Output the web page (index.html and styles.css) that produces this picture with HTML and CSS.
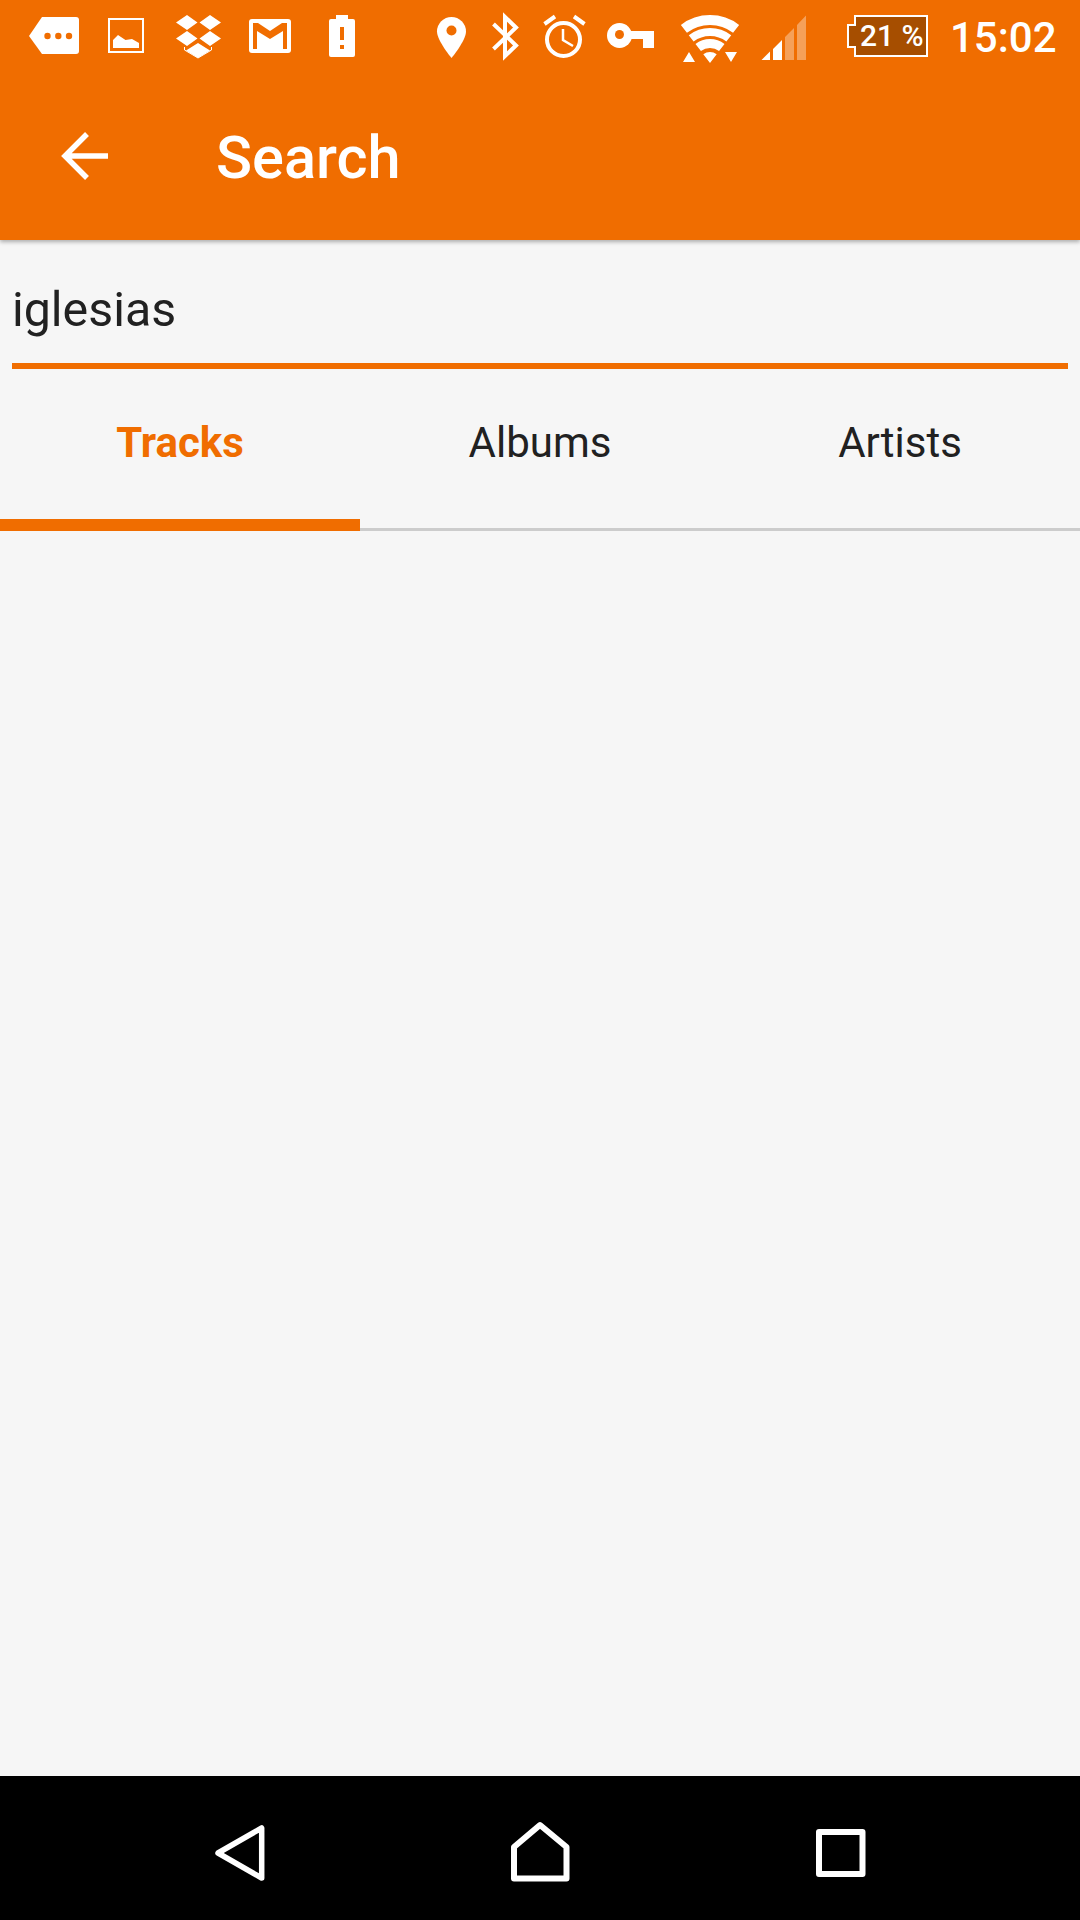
FILE: index.html

```html
<!DOCTYPE html>
<html lang="en">
    <head>
        <meta charset="UTF-8" />
        <title>Search</title>
        <link rel="stylesheet" href="styles.css">
    </head>
    <body>
        <div class="app">
            <header class="top">
                <div class="status">
                    <!-- every icon's viewBox is its slot on the status bar -->
                    <svg class="ico" width="72" height="72" viewBox="24 0 72 72">
                        <path class="w" d="M79 20v31a3 3 0 0 1-3 3H42L29 36l13-19h34a3 3 0 0 1 3 3z"/>
                        <circle class="o" cx="47.500" cy="36" r="3.200"/>
                        <circle class="o" cx="58.300" cy="36" r="3.200"/>
                        <circle class="o" cx="69" cy="36" r="3.200"/>
                    </svg>
                    <svg class="ico" width="69" height="72" viewBox="96 0 69 72">
                        <rect class="s" x="109" y="19" width="34" height="33" stroke-width="2"/>
                        <path class="w" d="M113 48v-8l5-5 7.500 5 6.500-1 7 4v5z"/>
                    </svg>
                    <svg class="ico" width="75" height="72" viewBox="165 0 75 72">
                        <path class="w" d="M187 15l10.500 7.500L187 30l-11-7.500zM210 15l11 7.500L210 30l-10.500-7.500zM187 31l10.500 7.500L187 46l-11-7.500zM210 31l11 7.500L210 46l-10.500-7.500zM198 43l12 7.500-12 7.500-12-7.500z"/>
                        <path class="s" d="M184.500 47v3l13.500 8 13.500-8v-3" stroke-width="1"/>
                    </svg>
                    <svg class="ico" width="75" height="72" viewBox="240 0 75 72">
                        <rect class="w" x="249" y="19" width="42" height="34" rx="3"/>
                        <path class="o" d="M253 23h5l12 8 12-8h5v26h-4V31l-13 8-13-8v18h-4z"/>
                    </svg>
                    <svg class="ico" width="115" height="72" viewBox="315 0 115 72">
                        <path class="w" d="M336 15h12v4h5a2 2 0 0 1 2 2v34a2 2 0 0 1-2 2h-22a2 2 0 0 1-2-2V21a2 2 0 0 1 2-2h5z"/>
                        <path class="o" d="M340 27h4v13h-4zM340 45h4v4h-4z"/>
                    </svg>
                    <svg class="ico" width="55" height="72" viewBox="430 0 55 72">
                        <path class="w" d="M451.500 17a14.500 14.500 0 0 1 14.500 14.500c0 9-14.500 26.500-14.500 26.500S437 40.500 437 31.500A14.500 14.500 0 0 1 451.500 17z"/>
                        <circle class="o" cx="451.500" cy="30.500" r="5"/>
                    </svg>
                    <svg class="ico" width="52" height="72" viewBox="485 0 52 72">
                        <path class="s" d="M493.500 24L516 45.500 505 56V17l11 10.500L493.500 49" stroke-width="4"/>
                    </svg>
                    <svg class="ico" width="60" height="72" viewBox="537 0 60 72">
                        <circle class="s" cx="563.500" cy="39.500" r="16.500" stroke-width="4"/>
                        <path class="s" d="M563 29v11l10 6" stroke-width="2.500"/>
                        <path class="s" d="M544.500 24l10.500-7.500M584.500 24L574 16.500" stroke-width="4"/>
                    </svg>
                    <svg class="ico" width="78" height="72" viewBox="597 0 78 72">
                        <circle class="w" cx="619.500" cy="35.500" r="12.500"/>
                        <path class="w" d="M628 31h26v17h-11v-9h-15z"/>
                        <circle class="o" cx="619.500" cy="34.500" r="4.500"/>
                    </svg>
                    <svg class="ico" width="81" height="72" viewBox="675 0 81 72">
                        <path class="s" d="M683.900 28.900A43 43 0 0 1 736.100 28.900" stroke-width="10"/>
                        <path class="s" d="M691.200 38.400A31 31 0 0 1 728.800 38.400" stroke-width="8"/>
                        <path class="s" d="M698.200 47.500A19.500 19.500 0 0 1 721.800 47.500" stroke-width="9"/>
                        <path class="w" d="M703.300 54.300A11 11 0 0 1 716.700 54.300L710 63zM683 62l6-10 6 10zM725 52h12l-6 10z"/>
                    </svg>
                    <svg class="ico" width="91" height="72" viewBox="756 0 91 72">
                        <path class="w" d="M761.500 60l8.500-8.500V60zM773 60V49l9-9v20z"/>
                        <path class="w dim" d="M785 60V37l9-9v32zM797 60V25l9-9.500V60z"/>
                    </svg>
                    <svg class="ico" width="92" height="72" viewBox="847 0 92 72">
                        <path class="batt" d="M855 16h72v40h-72V47h-7V25h7z" stroke-width="2"/>
                        <text class="batt-txt" x="860" y="46">21 %</text>
                    </svg>
                    <span class="time">15:02</span>
                </div>
                <div class="bar">
                    <svg class="back" width="56" height="56" viewBox="56 128 56 56">
                        <path class="s" d="M108 156H64M87 134l-22 22 22 22" stroke-width="5.500"/>
                    </svg>
                    <h1 class="title">Search</h1>
                </div>
            </header>

            <div class="field">
                <div class="query">iglesias</div>
            </div>

            <div class="tabs">
                <div class="tab on">Tracks</div>
                <div class="tab">Albums</div>
                <div class="tab">Artists</div>
            </div>

            <main class="list"></main>

            <nav class="nav">
                <div class="key">
                    <svg width="60" height="64" viewBox="210 1819 60 64">
                        <path class="s round" d="M261.700 1828v50L218 1853z" stroke-width="5.500"/>
                    </svg>
                </div>
                <div class="key">
                    <svg width="60" height="64" viewBox="510 1819 60 64">
                        <path class="s round" d="M514 1878.500h52.500V1847L540 1825l-26 22z" stroke-width="6"/>
                    </svg>
                </div>
                <div class="key">
                    <svg width="60" height="64" viewBox="810 1819 60 64">
                        <rect class="s round" x="819" y="1832" width="43.500" height="42" stroke-width="6"/>
                    </svg>
                </div>
            </nav>
        </div>
    </body>
</html>
```

FILE: styles.css

```css
body {
    margin: 0;
    font-family: Roboto, sans-serif;
    background-color: #f6f6f6;
    color: #212121;
}

.app {
    height: 1920px;
    display: flex;
    flex-direction: column;
}

/* orange top */
.top {
    height: 240px;
    background-color: #f06d00;
    box-shadow: 0 2px 4px rgba(0, 0, 0, 0.3);
}

.status {
    height: 72px;
    padding-left: 24px;
    display: flex;
    align-items: flex-start;
    color: #fff;
}

.ico {
    flex: none;
}

.w {
    fill: #fff;
}

.o {
    fill: #f06d00;
}

.s {
    fill: none;
    stroke: #fff;
}

.round {
    stroke-linejoin: round;
}

.dim {
    opacity: 0.35;
}

.batt {
    fill: #a64e00;
    stroke: #fff;
}

.batt-txt {
    font-family: Roboto, sans-serif;
    font-size: 30px;
    font-weight: 500;
    fill: #fff;
}

.time {
    margin-left: 11px;
    font-size: 42px;
    font-weight: 500;
    line-height: 48px;
    padding-top: 14px;
}

.bar {
    height: 168px;
    display: flex;
    align-items: flex-start;
    padding-left: 56px;
}

.back {
    margin-top: 56px;
}

.title {
    margin: 0;
    margin-left: 104px;
    padding-top: 46px;
    font-size: 59.500px;
    line-height: 80px;
    font-weight: 500;
    color: #fff;
}

/* search input */
.field {
    height: 123px;
    padding: 0 12px;
}

.query {
    box-sizing: border-box;
    height: 129px;
    padding-top: 30px;
    font-size: 48.300px;
    line-height: 80px;
    border-bottom: 6px solid #f06d00;
}

.tabs {
    margin-top: 6px;
    display: flex;
}

.tab {
    box-sizing: border-box;
    width: 360px;
    height: 162px;
    padding-top: 44px;
    text-align: center;
    font-size: 42px;
    line-height: 60px;
    border-bottom: 3px solid #ccc;
}

.tab.on {
    font-weight: 700;
    color: #f06d00;
    border-bottom: 12px solid #f06d00;
}

.list {
    flex: 1;
}

.nav {
    height: 144px;
    background-color: #000;
    display: flex;
    justify-content: center;
    align-items: center;
}

.key {
    width: 300px;
    padding-top: 6px;
    display: flex;
    justify-content: center;
}
```
